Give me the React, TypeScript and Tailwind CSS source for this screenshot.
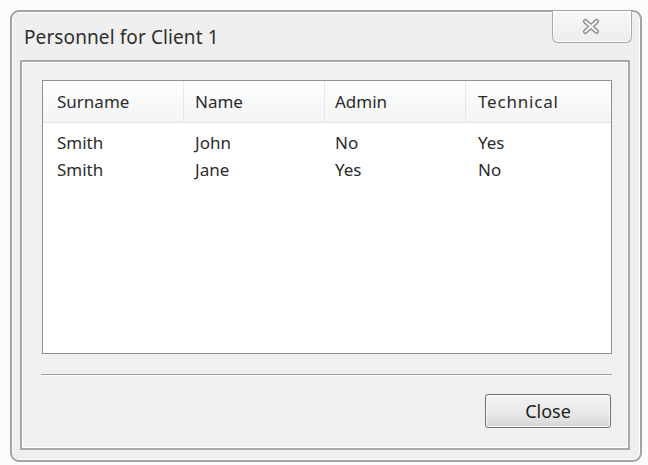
import React from "react";

const rows = [
  ["Smith", "John", "No", "Yes"],
  ["Smith", "Jane", "Yes", "No"],
];
const headers = ["Surname", "Name", "Admin", "Technical"];
const pads = ["pl-[14px]", "pl-[11px]", "pl-[10px]", "pl-[12px]"];

function CloseGlyph() {
  return (
    <svg width="18" height="17" viewBox="0 0 18 17">
      <path d="M3.5 3.5 L14.5 13.5 M14.5 3.5 L3.5 13.5" stroke="#8d8d8d" strokeWidth="5" strokeLinecap="round" fill="none" />
      <path d="M3.5 3.5 L14.5 13.5 M14.5 3.5 L3.5 13.5" stroke="#f5f5f5" strokeWidth="2.2" strokeLinecap="round" fill="none" />
    </svg>
  );
}

export default function App() {
  return (
    <div className="min-h-[465px] w-[648px] bg-[#fbfbfb] pt-[10px] pl-[10px]" style={{ fontFamily: '"Noto Sans", "Open Sans", sans-serif' }}>
      <div className="w-[632px] h-[452px] rounded-[9px] border-2 border-[#a3a3a3] bg-[#efefef] shadow-[inset_0_0_0_1px_#ffffff] flex flex-col">
        <div className="h-[48px] flex justify-between items-start shrink-0">
          <div className="pl-[12px] pt-[13px] text-[19px] leading-[24px] text-[#2e2e2e] tracking-[0.1px]">Personnel for Client 1</div>
          <div className="mr-[8px] -mt-[2px] w-[80px] h-[33px] rounded-b-[6px] border border-[#a8a8a8] border-t-[#a3a3a3] bg-gradient-to-b from-[#f7f7f7] to-[#ededed] shadow-[inset_0_0_0_1px_#ffffff] flex items-center justify-center pr-[2px]">
            <CloseGlyph />
          </div>
        </div>
        <div className="ml-[8px] mr-[10px] mb-[10px] flex-1 border-2 border-[#a8a8a8] shadow-[inset_0_0_0_1px_#ffffff] bg-[#f0f0f0] flex flex-col pl-[20px] pr-[16px] pt-[18px]">
          <div className="h-[274px] border border-[#8d8f94] bg-white flex flex-col text-[17px] text-[#2b2b2b]">
            <div className="h-[42px] flex bg-gradient-to-b from-[#ffffff] to-[#f3f4f5] border-b border-[#e3e4e6]">
              {headers.map((h, i) => (
                <div key={h} className={`w-[141px] flex items-center ${pads[i]} ${i === 3 ? "tracking-[0.8px]" : ""} ${i < 3 ? "border-r border-[#e6e7e8]" : ""}`}>{h}</div>
              ))}
            </div>
            <div className="flex flex-col pt-[6px]">
              {rows.map((r, ri) => (
                <div key={ri} className="flex h-[27px] items-center">
                  {r.map((c, ci) => (
                    <div key={ci} className={`w-[141px] ${pads[ci]}`}>{c}</div>
                  ))}
                </div>
              ))}
            </div>
          </div>
          <div className="mt-[20px] -ml-[1px] h-[2px] border-t border-[#a0a0a0] border-b border-b-white" />
          <div className="flex justify-end pt-[18px] pr-[1px]">
            <div className="w-[126px] h-[34px] rounded-[3px] border border-[#707070] bg-gradient-to-b from-[#f2f2f2] via-[#ebebeb] to-[#d6d6d6] shadow-[inset_0_0_0_1px_#fbfbfb] flex items-center justify-center text-[18px] text-[#1e1e1e]">
              Close
            </div>
          </div>
        </div>
      </div>
    </div>
  );
}
